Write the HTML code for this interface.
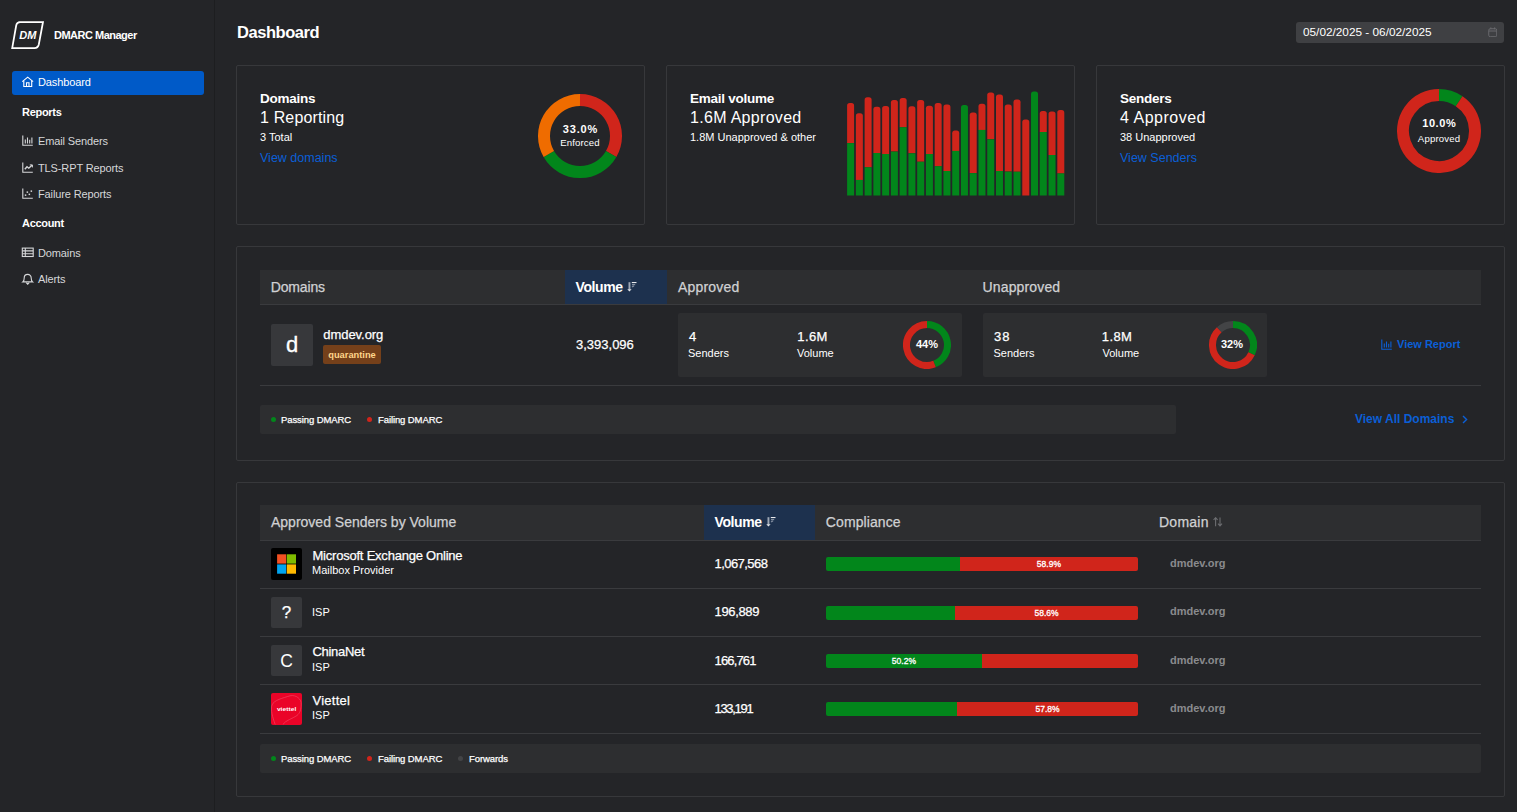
<!DOCTYPE html>
<html lang="en">
<head>
<meta charset="utf-8">
<title>Dashboard - DMARC Manager</title>
<style>
*{box-sizing:border-box;margin:0;padding:0}
html,body{width:1517px;height:812px;overflow:hidden;background:#242528;color:#fff;font-family:"Liberation Sans",sans-serif;font-size:11px}
a{text-decoration:none;color:#0b5fd6}
.abs{position:absolute;white-space:nowrap}
#sidebar{position:absolute;left:0;top:0;width:215px;height:812px;background:#242528;border-right:1px solid #1d1e20}
#logo{position:absolute;left:9px;top:19px;width:38px;height:32px}
#brand{position:absolute;left:54px;top:28px;font-weight:bold;font-size:11px;line-height:14px;letter-spacing:-0.5px}
.nav-active{position:absolute;left:12px;top:71px;width:192px;height:24px;background:#005ac8;border-radius:3px}
.nav-item{position:absolute;left:22px;height:16px;line-height:16px;font-size:11px;color:#d6d7d9;white-space:nowrap;letter-spacing:-0.12px}
.nav-item svg{position:absolute;left:0;top:2px;width:11px;height:11px;overflow:visible}
.nav-item span{position:absolute;left:16px;top:0}
.nav-head{position:absolute;left:22px;font-weight:bold;font-size:11px;line-height:14px;color:#fff;letter-spacing:-0.3px}
h1{position:absolute;left:237px;top:22px;font-size:16.5px;line-height:20px;font-weight:bold;letter-spacing:-0.45px}
#date{position:absolute;left:1296px;top:22px;width:208px;height:21px;background:#3f4043;border-radius:3px;font-size:11.8px;line-height:21px;padding-left:7px;color:#fff}
.card{position:absolute;border:1px solid #37383b;border-radius:2px}
.ct{position:absolute;left:23px;white-space:nowrap}
.c1{top:25px;font-size:13.5px;line-height:16px;font-weight:bold;letter-spacing:-0.25px}
.c2{top:42px;font-size:16px;line-height:20px}
.c3{top:64px;font-size:11px;line-height:14px}
.c4{top:85px;font-size:12.5px;line-height:15px}
.dl{text-align:center;font-size:9.6px;line-height:13.8px;white-space:nowrap;letter-spacing:0.15px}
.dl b{font-size:11px;letter-spacing:0.8px;margin-right:-0.8px}
.th{position:absolute;background:#2d2e30}
.th.sel{background:#1d314e}
.hl{position:absolute;height:1px;background:#3a3b3e}
.tht{position:absolute;font-size:14px;line-height:17px;color:#d0d1d3;white-space:nowrap}
.si{display:inline-block;vertical-align:0px;margin-left:4.5px}
.vol{color:#fff;font-weight:bold;letter-spacing:-0.4px;margin-left:-0.5px}
.mid{-webkit-text-stroke:0.25px currentColor}
.av{position:absolute;background:#37383b;border-radius:2px;text-align:center;color:#fff}
.box{position:absolute;background:#2d2e30;border-radius:2px}
.pc{text-align:center;font-size:11px;line-height:14px;font-weight:bold}
.lg{position:absolute;background:#2d2e30;border-radius:2px;font-size:9.5px;line-height:29px;letter-spacing:-0.1px}
.lg i{position:absolute;top:12px;width:5px;height:5px;border-radius:50%}
.lg span{position:absolute;top:0;white-space:nowrap;-webkit-text-stroke:0.25px #fff}
.t13{font-size:13px;line-height:16px}
.t11{font-size:11px;line-height:14px}
.bar{position:absolute;width:312px;height:14px;display:flex;border-radius:2px;overflow:hidden;font-size:8.5px;line-height:15.6px;text-align:center;color:#fff;-webkit-text-stroke:0.3px #fff}
.bar .g{background:#02861b;flex:none}
.bar .r{background:#d0251b;flex:1}
</style>
</head>
<body>
<div id="sidebar">
  <svg id="logo" viewBox="0 0 38 32"><path d="M9.6 3 H34 L29.8 25.5 Q29 29 25.4 29 H3.2 L7.2 6.5 Q7.8 3 11.4 3 Z" fill="none" stroke="#fff" stroke-width="1.75"/><text x="10.2" y="20.2" font-family="Liberation Sans, sans-serif" font-size="11" font-weight="bold" font-style="italic" fill="#fff">DM</text></svg>
  <div id="brand">DMARC Manager</div>
  <a class="nav-active"></a>
  <div class="nav-item" style="top:74px;color:#fff"><svg viewBox="0 0 11 11" style="overflow:visible" fill="none" stroke="#fff" stroke-width="1.1"><path d="M0.3 5.7 L5.7 1.1 L11.1 5.7"/><path d="M1.8 4.8 V10.5 H9.7 V4.8"/><path d="M4.5 10.5 V6.8 H7 V10.5"/></svg><span>Dashboard</span></div>
  <div class="nav-head" style="top:105px">Reports</div>
  <div class="nav-item" style="top:133px"><svg viewBox="0 0 11 11" width="11" height="11" fill="none" stroke="#d6d7d9" stroke-width="1.1"><path d="M0.8 0.5 V10.2 H10.8"/><path d="M3.3 8.6 V4.4 M5.5 8.6 V2.4 M7.7 8.6 V4.8 M9.9 8.6 V2.4"/></svg><span>Email Senders</span></div>
  <div class="nav-item" style="top:160px"><svg viewBox="0 0 11 11" fill="none" stroke="#d6d7d9" stroke-width="1.1"><path d="M0.8 0.5 V10.2 H10.8"/><path d="M2.8 7.2 L5 4.8 L6.8 6.2 L10 3.2" stroke-width="1.4"/><path d="M7.8 2.9 H10.4 V5.4" stroke-width="1"/></svg><span>TLS-RPT Reports</span></div>
  <div class="nav-item" style="top:186px"><svg viewBox="0 0 11 11" fill="none" stroke="#d6d7d9" stroke-width="1.1"><path d="M0.8 0.5 V10.2 H10.8"/><g fill="#d6d7d9" stroke="none"><rect x="2.8" y="6.4" width="1.5" height="1.5"/><rect x="4.6" y="3.4" width="1.5" height="1.5"/><rect x="6.6" y="5.6" width="1.5" height="1.5"/><rect x="8.6" y="2.4" width="1.5" height="1.5"/></g></svg><span>Failure Reports</span></div>
  <div class="nav-head" style="top:216px">Account</div>
  <div class="nav-item" style="top:245px"><svg viewBox="0 0 11 11" fill="none" stroke="#d6d7d9" stroke-width="1.1"><rect x="0.3" y="1.1" width="10.9" height="8.4"/><path d="M0.3 3.9 H11.2 M0.3 6.7 H11.2 M3.3 1.1 V9.5"/></svg><span>Domains</span></div>
  <div class="nav-item" style="top:271px"><svg viewBox="0 0 11 11" fill="none" stroke="#d6d7d9" stroke-width="1.1"><path d="M0.8 8.9 H10.6 C9.2 7.8 9.2 6.8 9.2 4.9 A3.5 3.5 0 0 0 2.2 4.9 C2.2 6.8 2.2 7.8 0.8 8.9 Z"/><path d="M4.2 9.6 L5.7 11.2 L7.2 9.6"/></svg><span>Alerts</span></div>
</div>
<h1>Dashboard</h1>
<div id="date">05/02/2025 - 06/02/2025<svg class="abs" style="left:191.5px;top:4.5px" width="9.5" height="10.5" viewBox="0 0 10 11" fill="none" stroke="#6b6c70" stroke-width="1"><rect x="0.8" y="1.8" width="8.4" height="8.4" rx="1.6"/><path d="M0.8 4.2 H9.2 M3 0.4 V2.4 M7 0.4 V2.4"/></svg></div>
<div class="card" style="left:236px;top:65px;width:409px;height:160px">
  <div class="ct c1">Domains</div>
  <div class="ct c2" style="letter-spacing:0.15px">1 Reporting</div>
  <div class="ct c3">3 Total</div>
  <a class="ct c4">View domains</a>
  <svg class="abs" style="left:301px;top:28px" width="84" height="84" viewBox="0 0 84 84"><path d="M42.00 6.00 A36 36 0 0 1 73.18 60.00" fill="none" stroke="#d0251b" stroke-width="12"/><path d="M73.18 60.00 A36 36 0 0 1 10.82 60.00" fill="none" stroke="#02861b" stroke-width="12"/><path d="M10.82 60.00 A36 36 0 0 1 42.00 6.00" fill="none" stroke="#ef6c00" stroke-width="12"/></svg>
  <div class="abs dl" style="left:301px;top:56.6px;width:84px"><b>33.0%</b><br>Enforced</div>
</div>
<div class="card" style="left:666px;top:65px;width:409px;height:160px">
  <div class="ct c1">Email volume</div>
  <div class="ct c2" style="letter-spacing:0.3px">1.6M Approved</div>
  <div class="ct c3">1.8M Unapproved &amp; other</div>
  <svg class="abs" style="left:180px;top:19px" width="222" height="115" viewBox="0 0 222 115"><path d="M0.10 58.10 V20.70 Q0.10 18.10 2.70 18.10 H4.50 Q7.10 18.10 7.10 20.70 V58.10 Z" fill="#d0251b"/><rect x="0.10" y="58.10" width="7" height="52.40" fill="#02861b"/><path d="M8.86 94.90 V30.90 Q8.86 28.30 11.46 28.30 H13.26 Q15.86 28.30 15.86 30.90 V94.90 Z" fill="#d0251b"/><rect x="8.86" y="94.90" width="7" height="15.60" fill="#02861b"/><path d="M17.62 82.20 V14.90 Q17.62 12.30 20.22 12.30 H22.02 Q24.62 12.30 24.62 14.90 V82.20 Z" fill="#d0251b"/><rect x="17.62" y="82.20" width="7" height="28.30" fill="#02861b"/><path d="M26.38 68.00 V24.30 Q26.38 21.70 28.98 21.70 H30.77 Q33.38 21.70 33.38 24.30 V68.00 Z" fill="#d0251b"/><rect x="26.38" y="68.00" width="7" height="42.50" fill="#02861b"/><path d="M35.13 69.00 V23.60 Q35.13 21.00 37.73 21.00 H39.53 Q42.13 21.00 42.13 23.60 V69.00 Z" fill="#d0251b"/><rect x="35.13" y="69.00" width="7" height="41.50" fill="#02861b"/><path d="M43.89 66.60 V17.60 Q43.89 15.00 46.49 15.00 H48.29 Q50.89 15.00 50.89 17.60 V66.60 Z" fill="#d0251b"/><rect x="43.89" y="66.60" width="7" height="43.90" fill="#02861b"/><path d="M52.65 42.20 V15.60 Q52.65 13.00 55.25 13.00 H57.05 Q59.65 13.00 59.65 15.60 V42.20 Z" fill="#d0251b"/><rect x="52.65" y="42.20" width="7" height="68.30" fill="#02861b"/><path d="M61.41 68.30 V23.90 Q61.41 21.30 64.01 21.30 H65.81 Q68.41 21.30 68.41 23.90 V68.30 Z" fill="#d0251b"/><rect x="61.41" y="68.30" width="7" height="42.20" fill="#02861b"/><path d="M70.17 76.70 V17.50 Q70.17 14.90 72.77 14.90 H74.57 Q77.17 14.90 77.17 17.50 V76.70 Z" fill="#d0251b"/><rect x="70.17" y="76.70" width="7" height="33.80" fill="#02861b"/><path d="M78.92 69.00 V23.30 Q78.92 20.70 81.52 20.70 H83.32 Q85.92 20.70 85.92 23.30 V69.00 Z" fill="#d0251b"/><rect x="78.92" y="69.00" width="7" height="41.50" fill="#02861b"/><path d="M87.68 81.20 V20.70 Q87.68 18.10 90.28 18.10 H92.08 Q94.68 18.10 94.68 20.70 V81.20 Z" fill="#d0251b"/><rect x="87.68" y="81.20" width="7" height="29.30" fill="#02861b"/><path d="M96.44 86.00 V22.00 Q96.44 19.40 99.04 19.40 H100.84 Q103.44 19.40 103.44 22.00 V86.00 Z" fill="#d0251b"/><rect x="96.44" y="86.00" width="7" height="24.50" fill="#02861b"/><path d="M105.20 65.90 V48.20 Q105.20 45.60 107.80 45.60 H109.60 Q112.20 45.60 112.20 48.20 V65.90 Z" fill="#d0251b"/><rect x="105.20" y="65.90" width="7" height="44.60" fill="#02861b"/><path d="M113.96 110.50 V22.70 Q113.96 20.10 116.56 20.10 H118.36 Q120.96 20.10 120.96 22.70 V110.50 Z" fill="#02861b"/><path d="M122.72 88.10 V30.20 Q122.72 27.60 125.32 27.60 H127.12 Q129.72 27.60 129.72 30.20 V88.10 Z" fill="#d0251b"/><rect x="122.72" y="88.10" width="7" height="22.40" fill="#02861b"/><path d="M131.48 44.90 V21.40 Q131.48 18.80 134.08 18.80 H135.88 Q138.48 18.80 138.48 21.40 V44.90 Z" fill="#d0251b"/><rect x="131.48" y="44.90" width="7" height="65.60" fill="#02861b"/><path d="M140.23 54.30 V10.00 Q140.23 7.40 142.83 7.40 H144.63 Q147.23 7.40 147.23 10.00 V54.30 Z" fill="#d0251b"/><rect x="140.23" y="54.30" width="7" height="56.20" fill="#02861b"/><path d="M148.99 86.00 V12.20 Q148.99 9.60 151.59 9.60 H153.39 Q155.99 9.60 155.99 12.20 V86.00 Z" fill="#d0251b"/><rect x="148.99" y="86.00" width="7" height="24.50" fill="#02861b"/><path d="M157.75 86.60 V22.00 Q157.75 19.40 160.35 19.40 H162.15 Q164.75 19.40 164.75 22.00 V86.60 Z" fill="#d0251b"/><rect x="157.75" y="86.60" width="7" height="23.90" fill="#02861b"/><path d="M166.51 86.70 V17.20 Q166.51 14.60 169.11 14.60 H170.91 Q173.51 14.60 173.51 17.20 V86.70 Z" fill="#d0251b"/><rect x="166.51" y="86.70" width="7" height="23.80" fill="#02861b"/><path d="M175.27 110.50 V37.00 Q175.27 34.40 177.87 34.40 H179.67 Q182.27 34.40 182.27 37.00 V110.50 Z" fill="#d0251b"/><path d="M184.03 110.50 V9.00 Q184.03 6.40 186.63 6.40 H188.43 Q191.03 6.40 191.03 9.00 V110.50 Z" fill="#02861b"/><path d="M192.78 47.00 V28.50 Q192.78 25.90 195.38 25.90 H197.18 Q199.78 25.90 199.78 28.50 V47.00 Z" fill="#d0251b"/><rect x="192.78" y="47.00" width="7" height="63.50" fill="#02861b"/><path d="M201.54 70.00 V29.00 Q201.54 26.40 204.14 26.40 H205.94 Q208.54 26.40 208.54 29.00 V70.00 Z" fill="#d0251b"/><rect x="201.54" y="70.00" width="7" height="40.50" fill="#02861b"/><path d="M210.30 88.40 V27.70 Q210.30 25.10 212.90 25.10 H214.70 Q217.30 25.10 217.30 27.70 V88.40 Z" fill="#d0251b"/><rect x="210.30" y="88.40" width="7" height="22.10" fill="#02861b"/></svg>
</div>
<div class="card" style="left:1096px;top:65px;width:409px;height:160px">
  <div class="ct c1">Senders</div>
  <div class="ct c2" style="letter-spacing:0.5px">4 Approved</div>
  <div class="ct c3">38 Unapproved</div>
  <a class="ct c4">View Senders</a>
  <svg class="abs" style="left:300px;top:23px" width="84" height="84" viewBox="0 0 84 84"><path d="M42.00 6.00 A36 36 0 0 1 62.13 12.15" fill="none" stroke="#02861b" stroke-width="12"/><path d="M62.13 12.15 A36 36 0 1 1 41.99 6.00" fill="none" stroke="#d0251b" stroke-width="12"/></svg>
  <div class="abs dl" style="left:300px;top:49.9px;width:84px;line-height:14.8px"><b style="letter-spacing:0.6px;margin-right:-0.6px">10.0%</b><br>Approved</div>
</div>
<div class="card" style="left:236px;top:246px;width:1269px;height:215px">
  <div class="th" style="left:23px;top:23px;width:1221px;height:35px"></div>
  <div class="th sel" style="left:328px;top:23px;width:102px;height:35px"></div>
  <div class="hl" style="left:23px;top:57px;width:1221px"></div>
  <div class="tht mid" style="left:33.7px;top:32px;letter-spacing:-0.15px">Domains</div>
  <div class="tht vol" style="left:339px;top:32px">Volume<svg class="si" viewBox="0 0 10 10" width="10" height="10"><rect x="1.5" y="0.2" width="1.9" height="7.4" fill="#9ea7b5"/><path d="M0.3 7.2 H4.6 L2.45 9.4 Z" fill="#e4e7eb"/><path d="M4.8 0.6 H9.5" stroke="#fff" stroke-width="1" fill="none"/><path d="M5 2.7 H8.2" stroke="#aab2bf" stroke-width="0.9" fill="none"/><path d="M5 4.9 L7 3.9" stroke="#7d899c" stroke-width="1.3" fill="none"/></svg></div>
  <div class="tht mid" style="left:441px;top:32px;letter-spacing:0.2px">Approved</div>
  <div class="tht mid" style="left:745.5px;top:32px;letter-spacing:0.15px">Unapproved</div>
  <div class="av" style="left:34px;top:77px;width:42px;height:42px;font-size:22px;line-height:42px;-webkit-text-stroke:0.3px #fff">d</div>
  <div class="abs t13 mid" style="left:86.3px;top:80px;letter-spacing:-0.05px">dmdev.org</div>
  <div class="abs" style="left:86px;top:98px;width:58px;height:19px;background:#75401a;border-radius:2px;color:#ffd58a;font-size:9.3px;line-height:21px;text-align:center;font-weight:bold">quarantine</div>
  <div class="abs t13 mid" style="left:339px;top:90px">3,393,096</div>
  <div class="box" style="left:441px;top:66px;width:284px;height:64px"></div>
  <div class="abs t13 mid" style="left:452px;top:82.4px">4</div>
  <div class="abs t11" style="left:451px;top:99px">Senders</div>
  <div class="abs t13 mid" style="left:560.3px;top:82.4px;letter-spacing:0.4px">1.6M</div>
  <div class="abs t11" style="left:560px;top:99px">Volume</div>
  <svg class="abs" style="left:666px;top:74px" width="48" height="48" viewBox="0 0 48 48"><path d="M24.00 3.50 A20.5 20.5 0 0 1 31.55 43.06" fill="none" stroke="#02861b" stroke-width="7"/><path d="M31.55 43.06 A20.5 20.5 0 1 1 24.00 3.50" fill="none" stroke="#d0251b" stroke-width="7"/></svg>
  <div class="abs pc" style="left:666px;top:90px;width:48px">44%</div>
  <div class="box" style="left:746px;top:66px;width:284px;height:64px"></div>
  <div class="abs t13 mid" style="left:757px;top:82.4px;letter-spacing:1px">38</div>
  <div class="abs t11" style="left:756.5px;top:99px">Senders</div>
  <div class="abs t13 mid" style="left:864.8px;top:82.4px;letter-spacing:0.4px">1.8M</div>
  <div class="abs t11" style="left:865.5px;top:99px">Volume</div>
  <svg class="abs" style="left:971.7px;top:74px" width="48" height="48" viewBox="0 0 48 48"><path d="M24.00 3.50 A20.5 20.5 0 0 1 42.55 32.73" fill="none" stroke="#02861b" stroke-width="7"/><path d="M42.55 32.73 A20.5 20.5 0 1 1 10.28 8.77" fill="none" stroke="#d0251b" stroke-width="7"/><path d="M10.28 8.77 A20.5 20.5 0 0 1 24.00 3.50" fill="none" stroke="#434446" stroke-width="7"/></svg>
  <div class="abs pc" style="left:971px;top:90px;width:48px">32%</div>
  <a class="abs t11" style="left:1144px;top:90px;font-weight:bold"><span style="position:absolute;left:0;top:2px"><svg viewBox="0 0 11 11" width="11" height="11" fill="none" stroke="#0b5fd6" stroke-width="1.1"><path d="M0.8 0.5 V10.2 H10.8"/><path d="M3.3 8.6 V4.4 M5.5 8.6 V2.4 M7.7 8.6 V4.8 M9.9 8.6 V2.4"/></svg></span><span style="margin-left:16px">View Report</span></a>
  <div class="hl" style="left:23px;top:138px;width:1221px"></div>
  <div class="lg" style="left:23px;top:158px;width:916px;height:29px">
    <i style="left:11px;background:#02861b"></i><span style="left:21px">Passing DMARC</span>
    <i style="left:107px;background:#d0251b"></i><span style="left:118px">Failing DMARC</span>
  </div>
  <a class="abs" style="left:1118px;top:164px;font-size:12px;line-height:16px;font-weight:bold">View All Domains<svg style="margin-left:8px;vertical-align:-0.5px" width="6" height="9" viewBox="0 0 6 9" fill="none" stroke="#0b5fd6" stroke-width="1.4"><path d="M1 1 L4.6 4.5 L1 8"/></svg></a>
</div>
<div class="card" style="left:236px;top:482px;width:1269px;height:315px">
  <div class="th" style="left:23px;top:22px;width:1221px;height:36px"></div>
  <div class="th sel" style="left:467px;top:22px;width:111px;height:36px"></div>
  <div class="hl" style="left:23px;top:57px;width:1221px"></div>
  <div class="tht mid" style="left:34px;top:31.4px">Approved Senders by Volume</div>
  <div class="tht vol" style="left:478px;top:31.4px">Volume<svg class="si" viewBox="0 0 10 10" width="10" height="10"><rect x="1.5" y="0.2" width="1.9" height="7.4" fill="#9ea7b5"/><path d="M0.3 7.2 H4.6 L2.45 9.4 Z" fill="#e4e7eb"/><path d="M4.8 0.6 H9.5" stroke="#fff" stroke-width="1" fill="none"/><path d="M5 2.7 H8.2" stroke="#aab2bf" stroke-width="0.9" fill="none"/><path d="M5 4.9 L7 3.9" stroke="#7d899c" stroke-width="1.3" fill="none"/></svg></div>
  <div class="tht mid" style="left:588.8px;top:31.4px;letter-spacing:0.1px">Compliance</div>
  <div class="tht mid" style="left:922px;top:31.4px;letter-spacing:0.25px">Domain<svg class="si" style="margin-left:4px" viewBox="0 0 10 10" width="10" height="10" fill="none" stroke="#6c6d70" stroke-width="1.1"><path d="M2.6 9.2 V0.8 M0.6 2.9 L2.6 0.7 L4.6 2.9"/><path d="M7 0.4 V8.8 M5 6.7 L7 8.9 L9 6.7"/></svg></div>
  <div class="av" style="left:34px;top:65.4px;width:31px;height:31.6px;background:#000"><svg class="abs" style="left:0;top:0" width="31" height="32" viewBox="0 0 31 32"><rect x="6.1" y="6.3" width="9.1" height="9.3" fill="#f25022"/><rect x="15.8" y="6.3" width="9.2" height="9.3" fill="#7fba00"/><rect x="6.1" y="16.4" width="9.1" height="9.3" fill="#00a4ef"/><rect x="15.8" y="16.4" width="9.2" height="9.3" fill="#ffb900"/></svg></div>
  <div class="abs t13 mid" style="left:75.5px;top:64.8px;letter-spacing:-0.22px">Microsoft Exchange Online</div>
  <div class="abs t11" style="left:75px;top:80.2px">Mailbox Provider</div>
  <div class="abs t13 mid" style="left:477.5px;top:72.9px;letter-spacing:-0.55px">1,067,568</div>
  <div class="bar" style="left:589px;top:74.3px"><div class="g" style="width:133.8px"></div><div class="r">58.9%</div></div>
  <div class="abs t11" style="left:933px;top:73.1px;font-weight:bold;color:#8a8b8e">dmdev.org</div>
  <div class="hl" style="left:23px;top:105px;width:1221px"></div>
  <div class="av mid" style="left:34px;top:113.6px;width:31px;height:31.6px;font-size:17px;line-height:31px">?</div>
  <div class="abs t11" style="left:75px;top:122.1px">ISP</div>
  <div class="abs t13 mid" style="left:477.5px;top:121.1px;letter-spacing:-0.35px">196,889</div>
  <div class="bar" style="left:589px;top:122.5px"><div class="g" style="width:129px"></div><div class="r">58.6%</div></div>
  <div class="abs t11" style="left:933px;top:121.3px;font-weight:bold;color:#8a8b8e">dmdev.org</div>
  <div class="hl" style="left:23px;top:153px;width:1221px"></div>
  <div class="av" style="left:34px;top:161.9px;width:31px;height:31.6px;font-size:17.5px;line-height:33.5px">C</div>
  <div class="abs t13 mid" style="left:75.5px;top:161.3px;letter-spacing:-0.3px">ChinaNet</div>
  <div class="abs t11" style="left:75px;top:176.7px">ISP</div>
  <div class="abs t13 mid" style="left:477.5px;top:170.0px;letter-spacing:-0.85px">166,761</div>
  <div class="bar" style="left:589px;top:170.8px"><div class="g" style="width:155.8px">50.2%</div><div class="r"></div></div>
  <div class="abs t11" style="left:933px;top:169.6px;font-weight:bold;color:#8a8b8e">dmdev.org</div>
  <div class="hl" style="left:23px;top:201px;width:1221px"></div>
  <div class="av" style="left:34px;top:210.4px;width:31px;height:31.6px;background:#ea0428;overflow:hidden"><svg class="abs" style="left:0;top:0" width="31" height="32" viewBox="0 0 31 32"><path d="M4.2 31.5 C1.5 24 -0.5 17 1 12 C3 7 12 5 19 2.8 C25 1.5 30.5 6 30.2 11 C30 17 29 20 26 22.5 C21 26 15 27 11.8 31.5" fill="none" stroke="#f2566f" stroke-width="0.55"/><text x="15.6" y="17.9" text-anchor="middle" font-family="Liberation Sans, sans-serif" font-size="5.1" font-weight="bold" fill="#fff" textLength="19.4" lengthAdjust="spacingAndGlyphs">viettel</text></svg></div>
  <div class="abs t13 mid" style="left:75.5px;top:209.8px;letter-spacing:0.25px">Viettel</div>
  <div class="abs t11" style="left:75px;top:225.2px">ISP</div>
  <div class="abs t13 mid" style="left:477.5px;top:217.9px;letter-spacing:-1.3px">133,191</div>
  <div class="bar" style="left:589px;top:219.3px"><div class="g" style="width:131.1px"></div><div class="r">57.8%</div></div>
  <div class="abs t11" style="left:933px;top:218.1px;font-weight:bold;color:#8a8b8e">dmdev.org</div>
  <div class="hl" style="left:23px;top:250px;width:1221px"></div>
  <div class="lg" style="left:23px;top:261px;width:1221px;height:29px">
    <i style="left:11px;background:#02861b"></i><span style="left:21px">Passing DMARC</span>
    <i style="left:107px;background:#d0251b"></i><span style="left:118px">Failing DMARC</span>
    <i style="left:198px;background:#434446"></i><span style="left:209px">Forwards</span>
  </div>
</div>
</body>
</html>
